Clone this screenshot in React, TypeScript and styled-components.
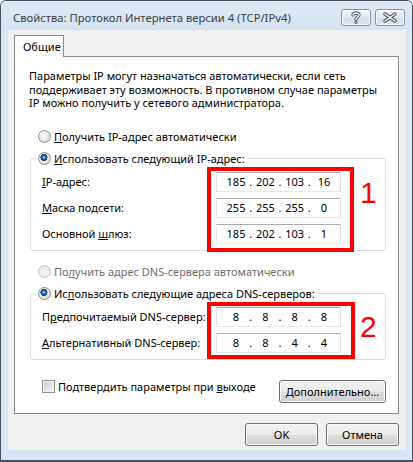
import React from "react";
import styled, { createGlobalStyle } from "styled-components";

const GlobalStyle = createGlobalStyle`
  html, body {
    margin: 0;
    padding: 0;
    background: #ffffff;
  }
  body {
    font-family: "Noto Sans", "Segoe UI", sans-serif;
    font-size: 11px;
    color: #000;
  }
  * {
    box-sizing: border-box;
  }
`;

const Window = styled.div`
  width: 413px;
  height: 462px;
  background: #dae5f3;
  border: 1px solid #46505c;
  border-bottom-width: 2px;
  border-radius: 6px 6px 0 0;
  display: flex;
  flex-direction: column;
  overflow: hidden;
`;

const TitleBar = styled.div`
  height: 29px;
  flex: none;
  display: flex;
  align-items: center;
  padding: 3px 7px 0 12px;
  background: linear-gradient(#dfe9f5, #d6e2f0);
`;

const Title = styled.div`
  flex: 1;
  font-size: 11.25px;
  color: #3b3f46;
  white-space: nowrap;
`;

const CaptionButtons = styled.div`
  display: flex;
  gap: 4px;
`;

const CaptionButton = styled.div`
  width: 30px;
  height: 17px;
  border: 1px solid #8495ab;
  border-radius: 3px;
  background: linear-gradient(#eef3f9 0%, #e1e9f3 50%, #d3deeb 51%, #dbe5f1 100%);
  box-shadow: inset 0 0 0 1px rgba(255, 255, 255, 0.7);
  display: flex;
  align-items: center;
  justify-content: center;
`;

const Content = styled.div`
  height: 420px;
  flex: none;
  margin: 0 6px 0 7px;
  background: #f0f0f0;
  padding: 5px 7px 0 6px;
  display: flex;
  flex-direction: column;
`;

const TabStrip = styled.div`
  display: flex;
`;

const Tab = styled.div`
  width: 50px;
  height: 22px;
  border: 1px solid #898c95;
  border-bottom: none;
  background: #ffffff;
  padding-left: 8px;
  line-height: 21px;
  margin-bottom: -1px;
  position: relative;
  z-index: 1;
`;

const Panel = styled.div`
  height: 358px;
  border: 1px solid #898c95;
  background: #ffffff;
  display: flex;
  flex-direction: column;
`;

const Intro = styled.div`
  padding: 12px 0 0 14px;
  line-height: 13.5px;
  white-space: nowrap;
`;

const RadioRow = styled.label<{ $disabled?: boolean; $top?: number }>`
  display: flex;
  align-items: center;
  gap: 3px;
  height: 15px;
  margin-top: ${(p) => p.$top ?? 0}px;
  padding-left: 23px;
  color: ${(p) => (p.$disabled ? "#6d6d6d" : "#000")};
  white-space: nowrap;
`;

const Radio = styled.span<{ $checked?: boolean; $disabled?: boolean }>`
  width: 13px;
  height: 13px;
  flex: none;
  border-radius: 50%;
  border: 1px solid ${(p) => (p.$disabled ? "#c5c5c5" : "#8e8f8f")};
  background: ${(p) =>
    (p.$checked
      ? "radial-gradient(circle at 45% 40%, #8fd0ff 0px, #2c7cc4 1.6px, #154a80 2.6px, #2b3f55 3.4px, transparent 3.7px), "
      : "") +
    (p.$disabled
      ? "radial-gradient(circle at 50% 50%, #f7f7f7 0%, #ececec 60%, #e0e0e0 100%)"
      : "radial-gradient(circle at 40% 40%, #ffffff 0%, #f0f0f0 35%, #d4d4d4 85%, #c8c8c8 100%)")};
`;

const Group = styled.fieldset`
  margin: 7px 12px 0 15px;
  padding: 6px 0 6px 0;
  border: 1px solid #d5dfe5;
  border-radius: 3px;
  min-width: 0;
`;

const Legend = styled.legend`
  margin-left: 5px;
  padding: 0 3px 0 2px;
  height: 15px;
  display: flex;
  align-items: center;
  gap: 3px;
  white-space: nowrap;
`;

const Rows = styled.div`
  position: relative;
  display: grid;
  grid-template-columns: 174px 125px;
  grid-auto-rows: 20px;
  row-gap: 6px;
  align-items: center;
  padding-left: 11px;
`;

const FieldLabel = styled.span`
  white-space: nowrap;
`;

const IpBox = styled.div`
  width: 125px;
  height: 20px;
  display: flex;
  align-items: center;
  padding-left: 8px;
  border: 1px solid;
  border-color: #abadb3 #dbdfe6 #e3e9ef #e2e3ea;
  background: #ffffff;
`;

const Octet = styled.span`
  width: 22px;
  text-align: center;
`;

const Dot = styled.span`
  width: 7.33px;
  text-align: center;
`;

const Highlight = styled.div<{ $h: number; $w: number }>`
  position: absolute;
  left: 176px;
  top: -5px;
  width: ${(p) => p.$w}px;
  height: ${(p) => p.$h}px;
  border: 4px solid #ff0000;
  pointer-events: none;
`;

const Marker = styled.div<{ $top: number }>`
  position: absolute;
  left: 329px;
  top: ${(p) => p.$top}px;
  font-family: "Liberation Sans", Arial, sans-serif;
  font-size: 30px;
  line-height: 30px;
  color: #ff0000;
`;

const Key = styled.span`
  text-decoration: underline;
  text-underline-offset: 1px;
`;

const BottomRow = styled.div`
  margin-top: 20px;
  padding: 0 12px 0 27px;
  display: flex;
  justify-content: space-between;
  align-items: flex-start;
`;

const CheckLabel = styled.label`
  display: flex;
  align-items: center;
  gap: 3px;
  height: 13px;
  white-space: nowrap;
`;

const CheckBox = styled.span`
  width: 13px;
  height: 13px;
  flex: none;
  border: 1px solid #8e8f8f;
  background: linear-gradient(135deg, #c8ccd2 0%, #e6e7e9 60%, #f7f7f7 100%);
  box-shadow: inset 0 0 0 1px #f4f4f4;
`;

const Button = styled.button<{ $w: number }>`
  width: ${(p) => p.$w}px;
  height: 23px;
  padding: 0;
  border: 1px solid #707070;
  border-radius: 3px;
  background: linear-gradient(#f2f2f2 0%, #ebebeb 50%, #dddddd 51%, #cfcfcf 100%);
  box-shadow: inset 0 0 0 1px #fbfbfb;
  font: inherit;
  color: #000;
`;

const DialogButtons = styled.div`
  margin-top: 9px;
  display: flex;
  justify-content: flex-end;
  gap: 8px;
`;

function HelpGlyph() {
    const d = "M3 4 C3 1.5 9 1.5 9 4 C9 6 6 6 6 8.5";
    return (
        <svg width="12" height="13" viewBox="0 0 12 13">
            <path d={d} fill="none" stroke="#4f5863" strokeWidth="3.2" strokeLinecap="round"/>
            <path d={d} fill="none" stroke="#ffffff" strokeWidth="1.4" strokeLinecap="round"/>
            <circle cx="6" cy="11.3" r="1.6" fill="#4f5863"/>
            <circle cx="6" cy="11.3" r="0.7" fill="#ffffff"/>
        </svg>
    );
}

function CloseGlyph() {
    const d = "M2 2 L12 9 M12 2 L2 9";
    return (
        <svg width="14" height="11" viewBox="0 0 14 11">
            <path d={d} fill="none" stroke="#4f5863" strokeWidth="3.4" strokeLinecap="round"/>
            <path d={d} fill="none" stroke="#ffffff" strokeWidth="1.4" strokeLinecap="round"/>
        </svg>
    );
}

function Ip({ parts }: { parts: string[] }) {
    return (
        <IpBox>
            {parts.map((p, i) => (
                <React.Fragment key={i}>
                    {i > 0 && <Dot>.</Dot>}
                    <Octet>{p}</Octet>
                </React.Fragment>
            ))}
        </IpBox>
    );
}

export default function App() {
    return (
        <>
            <GlobalStyle/>
            <Window>
                <TitleBar>
                    <Title>Свойства: Протокол Интернета версии 4 (TCP/IPv4)</Title>
                    <CaptionButtons>
                        <CaptionButton><HelpGlyph/></CaptionButton>
                        <CaptionButton><CloseGlyph/></CaptionButton>
                    </CaptionButtons>
                </TitleBar>
                <Content>
                    <TabStrip>
                        <Tab>Общие</Tab>
                    </TabStrip>
                    <Panel>
                        <Intro>
                            Параметры IP могут назначаться автоматически, если сеть<br/>
                            поддерживает эту возможность. В противном случае параметры<br/>
                            IP можно получить у сетевого администратора.
                        </Intro>

                        <RadioRow $top={19}>
                            <Radio/>
                            <span><Key>П</Key>олучить IP-адрес автоматически</span>
                        </RadioRow>
                        <Group>
                            <Legend>
                                <Radio $checked/>
                                <span><Key>И</Key>спользовать следующий IP-адрес:</span>
                            </Legend>
                            <Rows>
                                <FieldLabel><Key>I</Key>P-адрес:</FieldLabel>
                                <Ip parts={["185", "202", "103", "16"]}/>
                                <FieldLabel><Key>М</Key>аска подсети:</FieldLabel>
                                <Ip parts={["255", "255", "255", "0"]}/>
                                <FieldLabel>Основной <Key>ш</Key>люз:</FieldLabel>
                                <Ip parts={["185", "202", "103", "1"]}/>
                                <Highlight $w={147} $h={85}/>
                                <Marker $top={6}>1</Marker>
                            </Rows>
                        </Group>

                        <RadioRow $top={13} $disabled>
                            <Radio $disabled/>
                            <span>По<Key>л</Key>учить адрес DNS-сервера автоматически</span>
                        </RadioRow>
                        <Group>
                            <Legend>
                                <Radio $checked/>
                                <span>Ис<Key>п</Key>ользовать следующие адреса DNS-серверов:</span>
                            </Legend>
                            <Rows>
                                <FieldLabel>П<Key>р</Key>едпочитаемый DNS-сервер:</FieldLabel>
                                <Ip parts={["8", "8", "8", "8"]}/>
                                <FieldLabel><Key>А</Key>льтернативный DNS-сервер:</FieldLabel>
                                <Ip parts={["8", "8", "4", "4"]}/>
                                <Highlight $w={148} $h={57}/>
                                <Marker $top={5}>2</Marker>
                            </Rows>
                        </Group>

                        <BottomRow>
                            <CheckLabel>
                                <CheckBox/>
                                <span>Подтвердить параметры при <Key>в</Key>ыходе</span>
                            </CheckLabel>
                            <Button $w={107}><Key>Д</Key>ополнительно...</Button>
                        </BottomRow>
                    </Panel>
                    <DialogButtons>
                        <Button $w={73}>OK</Button>
                        <Button $w={73}>Отмена</Button>
                    </DialogButtons>
                </Content>
            </Window>
        </>
    );
}
